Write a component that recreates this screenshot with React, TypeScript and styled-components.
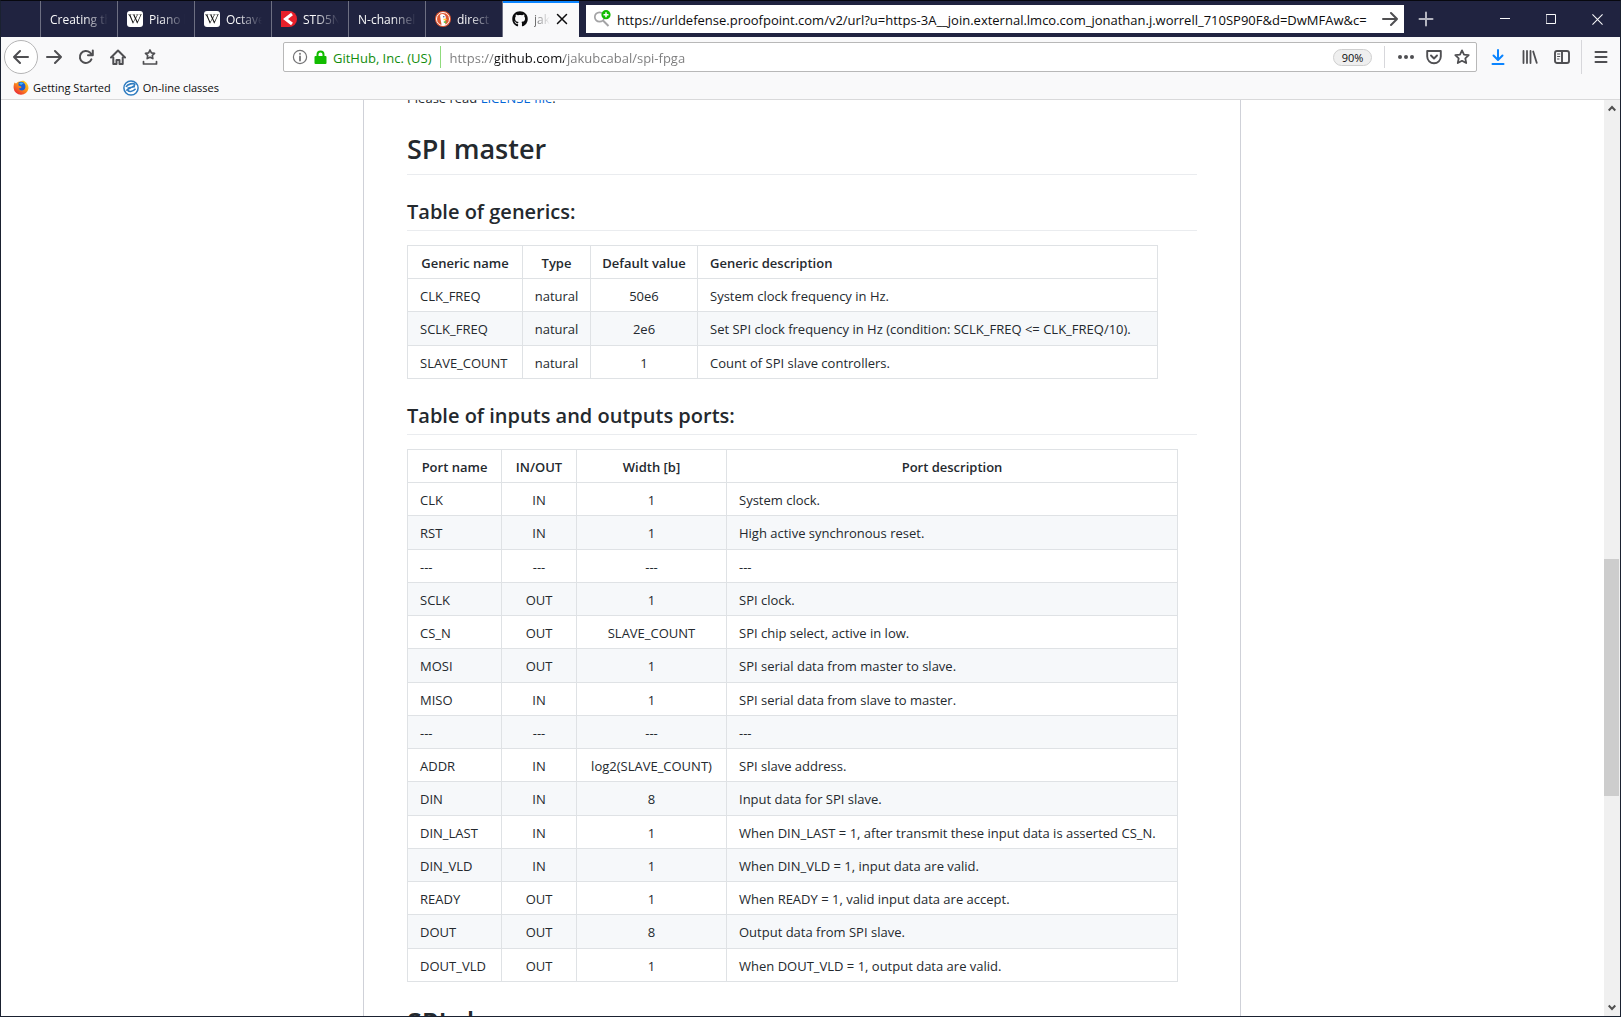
import React from "react";
import styled, { createGlobalStyle, css } from "styled-components";
import { FaGithub, FaWikipediaW } from "react-icons/fa";

const GlobalStyle = createGlobalStyle`
  *, *::before, *::after { box-sizing: border-box; }
  body {
    margin: 0;
    overflow: hidden;
    font-family: "Open Sans", "Noto Sans", sans-serif;
    font-size: 13px;
    color: #24292e;
    background: #fff;
  }
  button, input { font: inherit; margin: 0; }
`;

const Window = styled.div`
  display: flex;
  flex-direction: column;
  height: 100vh;
  border: 1px solid #1a2130;
  border-top-color: #07080f;
`;

/* ---------- tab strip ---------- */

const TabStrip = styled.header`
  display: flex;
  flex: none;
  height: 36px;
  background: #202340;
`;

const TabSpacer = styled.div`
  width: 40px;
  border-right: 1px solid #6d6f82;
`;

const Tab = styled.button<{ $active?: boolean }>`
  display: flex;
  align-items: center;
  gap: 6px;
  flex: none;
  width: 77px;
  height: 36px;
  padding: 0 9px;
  border: 0;
  border-right: 1px solid ${(p) => (p.$active ? "#202340" : "#6d6f82")};
  background: #202340;
  color: #f9f9fa;
  font-size: 12px;
  text-align: left;

  ${(p) =>
    p.$active &&
    css`
      background: #f9f9fa;
      color: #0c0c0d;
      box-shadow: inset 0 2px 0 #0a84ff;
      padding-right: 11px;
    `}
`;

const TabTitle = styled.span`
  flex: 1;
  min-width: 0;
  padding-top: 2px;
  overflow: hidden;
  white-space: nowrap;
  line-height: 18px;
  mask-image: linear-gradient(to left, transparent, #000 24px);
`;

const Favicon = styled.span`
  display: flex;
  align-items: center;
  justify-content: center;
  flex: none;
  width: 16px;
  height: 16px;
`;

const WikiIcon = styled(Favicon)`
  border-radius: 3px;
  background: #fff;
  color: #111;
  font-size: 14px;
`;

const SearchBox = styled.form`
  display: flex;
  align-items: center;
  flex: 1;
  gap: 6px;
  min-width: 0;
  margin: 4px 0 4px 6px;
  padding: 0 6px 0 7px;
  background: #fff;
`;

const SearchInput = styled.input`
  flex: 1;
  min-width: 0;
  padding: 2px 0 0;
  border: 0;
  outline: 0;
  background: transparent;
  color: #0c0c0d;
  font-size: 13px;
  line-height: 20px;
`;

const IconButton = styled.button<{ $width?: number }>`
  display: flex;
  align-items: center;
  justify-content: center;
  flex: none;
  width: ${(p) => p.$width ?? 32}px;
  height: 32px;
  padding: 0;
  border: 0;
  background: none;
  color: #4f4f52;
`;

const NewTab = styled(IconButton)`
  margin: 2px 34px 0 0;
  color: #b4b5c0;
`;

const WindowButton = styled(IconButton)`
  margin-top: 2px;
  color: #f9f9fa;
`;

/* ---------- navigation bar ---------- */

const NavBar = styled.nav`
  display: flex;
  align-items: center;
  flex: none;
  height: 40px;
  padding: 0 1px 0 3px;
  background: #f9f9fa;
`;

const BackButton = styled(IconButton)`
  width: 34px;
  height: 34px;
  border: 1px solid #b5b5b6;
  border-radius: 50%;
  background: #fff;
`;

const DownloadsButton = styled(IconButton)`
  color: #0a84ff;
`;

const AddressBar = styled.div`
  display: flex;
  align-items: center;
  flex: 1;
  min-width: 0;
  height: 30px;
  margin: 0 5px 0 117px;
  padding-left: 8px;
  border: 1px solid #b8b8b8;
  border-radius: 2px;
  background: #fff;
`;

const Identity = styled.button`
  display: flex;
  align-items: center;
  gap: 6px;
  flex: none;
  height: 22px;
  padding: 0 8px 0 0;
  border: 0;
  border-right: 1px solid #8fdb7c;
  background: none;
  color: #737375;
  font-size: 13px;
`;

const Owner = styled.span`
  padding-top: 2px;
  color: #128c0c;
  line-height: 20px;
`;

const AddressInput = styled.input`
  flex: 1;
  min-width: 0;
  padding: 2px 0 0;
  margin-left: 9px;
  border: 0;
  outline: 0;
  color: #7a7a7b;
  font-size: 13px;
  line-height: 20px;
  background: linear-gradient(
    to right,
    #7a7a7b 45px,
    #0c0c0d 45px 114px,
    #7a7a7b 114px
  );
  background-clip: text;
  -webkit-text-fill-color: transparent;
`;

const Zoom = styled.button`
  flex: none;
  width: 39px;
  height: 17px;
  padding: 0;
  margin-right: 12px;
  border: 1px solid #cfcfcf;
  border-radius: 9px;
  background: #efefef;
  color: #0c0c0d;
  font-size: 11px;
  line-height: 15px;
`;

const Divider = styled.span<{ $height: number }>`
  flex: none;
  width: 1px;
  height: ${(p) => p.$height}px;
  background: #d7d7db;
`;

const Tools = styled.div`
  display: flex;
  flex: none;
  padding-right: 3px;
`;

const PageActions = styled.div`
  display: flex;
  align-items: center;
  flex: none;
  padding-left: 7px;
`;

const BookmarksBar = styled.div`
  display: flex;
  align-items: center;
  flex: none;
  gap: 12px;
  height: 23px;
  padding: 0 12px;
  border-bottom: 1px solid #d9d9da;
  background: #f9f9fa;
`;

const Bookmark = styled.a`
  display: flex;
  align-items: center;
  gap: 4px;
  color: #0c0c0d;
  font-size: 11px;
  line-height: 18px;
  text-decoration: none;
`;

/* ---------- page ---------- */

const Viewport = styled.div`
  display: flex;
  flex: 1;
  min-height: 0;
`;

const Page = styled.main`
  flex: 1;
  min-width: 0;
  padding-right: 1px;
  overflow: hidden;
  background: #fff;
`;

const Readme = styled.article`
  width: 100%;
  max-width: 878px;
  margin: -13px auto 0;
  padding: 0 43px;
  border: solid #cfd1d8;
  border-width: 0 1px;
  line-height: 22px;
`;

const Paragraph = styled.p`
  margin: 0;
`;

const TextLink = styled.a`
  color: #0366d6;
  text-decoration: none;
`;

const Heading = styled.h1`
  margin: 22px 0 0;
  padding-bottom: 7px;
  border-bottom: 1px solid #eaecef;
  font-size: 27px;
  font-weight: 600;
  line-height: 36px;
`;

const SubHeading = styled.h2`
  margin: 23px 0 14px;
  padding-bottom: 5px;
  border-bottom: 1px solid #eaecef;
  font-size: 20px;
  font-weight: 600;
  line-height: 27px;
`;

const Table = styled.table<{ $width: number }>`
  width: ${(p) => p.$width}px;
  table-layout: fixed;
  border-collapse: collapse;
`;

const Column = styled.col<{ $width: number }>`
  width: ${(p) => p.$width}px;
`;

const Row = styled.tr`
  tbody &:nth-child(2n) {
    background: #f6f8fa;
  }
  tbody &:nth-child(4n + 2) > td {
    padding-bottom: 5px;
  }
`;

type Align = "left" | "center";

const cell = css<{ $align: Align }>`
  padding: 6px ${(p) => (p.$align === "left" ? 12 : 8)}px 4px;
  border: 1px solid #dfe2e5;
  text-align: ${(p) => p.$align};
  white-space: nowrap;
`;

const HeadCell = styled.th<{ $align: Align }>`
  ${cell}
  font-weight: 600;
`;

const Cell = styled.td<{ $align: Align }>`
  ${cell}
`;

const ScrollBar = styled.div`
  display: grid;
  grid-template-rows: 17px 443fr 237fr 203fr 17px;
  justify-items: center;
  align-items: center;
  flex: none;
  width: 16px;
  background: #f0f0f0;
  color: #505050;
`;

const Thumb = styled.div`
  grid-row: 3;
  justify-self: start;
  width: 15px;
  height: 100%;
  background: #cdcdcd;
`;

const ScrollArrow = styled.svg<{ $row: number }>`
  grid-row: ${(p) => p.$row};
`;

/* ---------- icons ---------- */

function Icon({
  size = 16,
  width = 2,
  children,
}: {
  size?: number;
  width?: number;
  children: React.ReactNode;
}) {
  return (
    <svg
      width={size}
      height={size}
      viewBox="0 0 16 16"
      fill="none"
      stroke="currentColor"
      strokeWidth={width}
      strokeLinecap="round"
      strokeLinejoin="round"
      aria-hidden="true"
    >
      {children}
    </svg>
  );
}

const starPath =
  "M8 1.4l2 4.2 4.7.6-3.4 3.2.9 4.6L8 11.8 3.8 14l.9-4.6L1.3 6.2 6 5.6z";

const RedArrowIcon = () => (
  <svg width="16" height="16" viewBox="0 0 16 16" aria-hidden="true">
    <path d="M0 0h8a8 8 0 0 1 0 16H0z" fill="#e8202a" />
    <path d="M11 3L4.500 8l6.500 5" fill="none" stroke="#fff" strokeWidth="3" />
  </svg>
);

const DuckIcon = () => (
  <svg width="16" height="16" viewBox="0 0 16 16" aria-hidden="true">
    <circle cx="8" cy="8" r="8" fill="#de5833" />
    <circle cx="8" cy="8" r="6.500" fill="none" stroke="#fff" strokeWidth="1" />
    <path d="M5 4c2-2 5.500-.8 5.800 2.200L10.500 9l-.8 1.500 1 3.600c-1.500.5-3 .5-4 .1L5.600 8.500z" fill="#fff" />
    <path d="M8.500 7.500l3.500.4-1 1.300H8.500z" fill="#fc3" />
    <path d="M8.600 10.500l2.600-.6v2.300l-2.400-.5z" fill="#67bd47" />
    <circle cx="8.800" cy="5.700" r="0.700" fill="#2d4f8e" />
  </svg>
);

const SearchAddIcon = () => (
  <svg width="18" height="18" viewBox="0 0 18 18" aria-hidden="true">
    <circle cx="6.500" cy="7" r="4.700" fill="none" stroke="#a3a3a5" strokeWidth="1.700" />
    <path d="M10 10.500l5.500 5.500" stroke="#a3a3a5" strokeWidth="2" />
    <circle cx="13" cy="4.700" r="4.600" fill="#12bc00" />
    <path d="M13 2.200v5M10.500 4.700h5" stroke="#fff" strokeWidth="1.500" />
  </svg>
);

const LockIcon = () => (
  <svg width="13" height="14" viewBox="0 0 13 14" aria-hidden="true">
    <rect x="0.500" y="6" width="12" height="8" rx="1" fill="#12bc00" />
    <path d="M3.500 7V4.500a3 3 0 0 1 6 0V7" fill="none" stroke="#12bc00" strokeWidth="2" />
  </svg>
);

const FirefoxIcon = () => (
  <svg width="16" height="16" viewBox="0 0 16 16" aria-hidden="true">
    <defs>
      <linearGradient id="flame" x1="1" y1="0" x2="0.200" y2="1">
        <stop offset="0" stopColor="#ffe226" />
        <stop offset="0.450" stopColor="#ff9a16" />
        <stop offset="1" stopColor="#e8203a" />
      </linearGradient>
    </defs>
    <path d="M1.500 2.500l1.500 1C4.500 2 6 1.300 8 1.200c1.500-.6 3-.4 3.500 0 2.500 1.300 4 4 4 7.100A7.500 7.500 0 0 1 .6 8C.5 6 .9 4 1.500 2.500z" fill="url(#flame)" />
    <path d="M5.500 2.500c2-1.200 5-.8 6.300 1.500 1.200 2.500.7 5-1 6-2 1-4.300.3-5-1.500l2-.6c.8-.4.8-1 .2-1.400L5.500 5.600z" fill="#1d5fd0" />
    <path d="M6 3.200c1.500-1 3.500-1 4.700 0L8 5z" fill="#3fb7f5" />
  </svg>
);

const ClassesIcon = () => (
  <svg width="16" height="16" viewBox="0 0 16 16" aria-hidden="true">
    <circle cx="8" cy="8" r="7.100" fill="#fff" stroke="#2f7cc0" strokeWidth="1.500" />
    <path d="M3 6.800C5 3.600 10.500 3 11.800 4.300 12.500 6.500 6 8 3.200 10.500M4.600 9.500c.6 3 5 2.500 8-.8M4.500 8.300L12 6.500" fill="none" stroke="#2f7cc0" strokeWidth="1.600" />
  </svg>
);

/* ---------- data ---------- */

interface ColumnSpec {
  title: string;
  width: number;
  align: Align;
  headAlign?: Align;
}

const genericColumns: ColumnSpec[] = [
  { title: "Generic name", width: 115, align: "left", headAlign: "center" },
  { title: "Type", width: 68, align: "center" },
  { title: "Default value", width: 107, align: "center" },
  { title: "Generic description", width: 460, align: "left" },
];

const generics = [
  ["CLK_FREQ", "natural", "50e6", "System clock frequency in Hz."],
  ["SCLK_FREQ", "natural", "2e6", "Set SPI clock frequency in Hz (condition: SCLK_FREQ <= CLK_FREQ/10)."],
  ["SLAVE_COUNT", "natural", "1", "Count of SPI slave controllers."],
];

const portColumns: ColumnSpec[] = [
  { title: "Port name", width: 94, align: "left", headAlign: "center" },
  { title: "IN/OUT", width: 75, align: "center" },
  { title: "Width [b]", width: 150, align: "center" },
  { title: "Port description", width: 451, align: "left", headAlign: "center" },
];

const ports = [
  ["CLK", "IN", "1", "System clock."],
  ["RST", "IN", "1", "High active synchronous reset."],
  ["---", "---", "---", "---"],
  ["SCLK", "OUT", "1", "SPI clock."],
  ["CS_N", "OUT", "SLAVE_COUNT", "SPI chip select, active in low."],
  ["MOSI", "OUT", "1", "SPI serial data from master to slave."],
  ["MISO", "IN", "1", "SPI serial data from slave to master."],
  ["---", "---", "---", "---"],
  ["ADDR", "IN", "log2(SLAVE_COUNT)", "SPI slave address."],
  ["DIN", "IN", "8", "Input data for SPI slave."],
  ["DIN_LAST", "IN", "1", "When DIN_LAST = 1, after transmit these input data is asserted CS_N."],
  ["DIN_VLD", "IN", "1", "When DIN_VLD = 1, input data are valid."],
  ["READY", "OUT", "1", "When READY = 1, valid input data are accept."],
  ["DOUT", "OUT", "8", "Output data from SPI slave."],
  ["DOUT_VLD", "OUT", "1", "When DOUT_VLD = 1, output data are valid."],
];

function DataTable({ columns, rows }: { columns: ColumnSpec[]; rows: string[][] }) {
  const width = columns.reduce((sum, c) => sum + c.width, 1);
  return (
    <Table $width={width}>
      <colgroup>
        {columns.map((c) => (
          <Column key={c.title} $width={c.width} />
        ))}
      </colgroup>
      <thead>
        <Row>
          {columns.map((c) => (
            <HeadCell key={c.title} scope="col" $align={c.headAlign ?? c.align}>
              {c.title}
            </HeadCell>
          ))}
        </Row>
      </thead>
      <tbody>
        {rows.map((row, r) => (
          <Row key={r}>
            {row.map((text, i) => (
              <Cell key={i} $align={columns[i].align}>
                {text}
              </Cell>
            ))}
          </Row>
        ))}
      </tbody>
    </Table>
  );
}

const Wiki = () => (
  <WikiIcon>
    <FaWikipediaW />
  </WikiIcon>
);

const tabs: { title: string; icon?: React.ReactNode }[] = [
  { title: "Creating th" },
  { title: "Piano k", icon: <Wiki /> },
  { title: "Octave", icon: <Wiki /> },
  { title: "STD5N", icon: <Favicon><RedArrowIcon /></Favicon> },
  { title: "N-channel" },
  { title: "direct c", icon: <Favicon><DuckIcon /></Favicon> },
];

export default function App() {
  return (
    <>
      <GlobalStyle />
      <Window>
        <TabStrip>
          <TabSpacer />
          {tabs.map((tab) => (
            <Tab key={tab.title} type="button">
              {tab.icon}
              <TabTitle>{tab.title}</TabTitle>
            </Tab>
          ))}
          <Tab type="button" $active>
            <Favicon><FaGithub size={16} /></Favicon>
            <TabTitle>jak</TabTitle>
            <Icon size={12} width={2}><path d="M2 2l12 12M14 2L2 14" /></Icon>
          </Tab>
          <SearchBox onSubmit={(e) => e.preventDefault()}>
            <SearchAddIcon />
            <SearchInput
              aria-label="Search"
              defaultValue="https://urldefense.proofpoint.com/v2/url?u=https-3A__join.external.lmco.com_jonathan.j.worrell_710SP90F&d=DwMFAw&c="
            />
            <IconButton $width={16} aria-label="Go">
              <Icon><path d="M1 8h14M9 2l6 6-6 6" /></Icon>
            </IconButton>
          </SearchBox>
          <NewTab type="button" $width={44} aria-label="New tab">
            <Icon><path d="M8 1.500v13M1.500 8h13" /></Icon>
          </NewTab>
          <WindowButton type="button" $width={46} aria-label="Minimize">
            <Icon size={10} width={1.6}><path d="M0 7.200h16" /></Icon>
          </WindowButton>
          <WindowButton type="button" $width={46} aria-label="Maximize">
            <Icon size={10} width={1.6}><path d="M0.800 0.800h14.400v14.400H0.800z" /></Icon>
          </WindowButton>
          <WindowButton type="button" $width={46} aria-label="Close">
            <Icon size={11} width={1.5}><path d="M1 1l14 14M15 1L1 15" /></Icon>
          </WindowButton>
        </TabStrip>

        <NavBar>
          <BackButton type="button" aria-label="Back">
            <Icon><path d="M15 8H1M7 2L1 8l6 6" /></Icon>
          </BackButton>
          <IconButton type="button" aria-label="Forward">
            <Icon><path d="M1 8h14M9 2l6 6-6 6" /></Icon>
          </IconButton>
          <IconButton type="button" aria-label="Reload">
            <Icon><path d="M13.400 10.300A6 6 0 1 1 12 3.600l2 2M14.800 1.500v4.700H10" /></Icon>
          </IconButton>
          <IconButton type="button" aria-label="Home">
            <Icon><path d="M1 8.500L8 1.500l7 7M3.300 8.500V15h3.200v-4h3v4h3.200V8.500" /></Icon>
          </IconButton>
          <IconButton type="button" aria-label="Show bookmarks">
            <Icon width={1.7}>
              <path d="M8 1l1.400 2.900 3.100.4-2.200 2.200.5 3.100L8 8.200 5.200 9.600l.5-3.100-2.200-2.200 3.100-.4zM1.500 12.500v2.500h13v-2.500" />
            </Icon>
          </IconButton>

          <AddressBar>
            <Identity type="button">
              <Icon width={1.2}>
                <circle cx="8" cy="8" r="6.600" />
                <path d="M8 7.500v4M8 4.700v.2" strokeWidth="1.800" />
              </Icon>
              <LockIcon />
              <Owner>GitHub, Inc. (US)</Owner>
            </Identity>
            <AddressInput aria-label="Address" defaultValue="https://github.com/jakubcabal/spi-fpga" />
            <Zoom type="button">90%</Zoom>
            <Divider $height={22} />
            <PageActions>
              <IconButton type="button" $width={28} aria-label="Page actions">
                <Icon width={0}>
                  <g fill="currentColor">
                    <circle cx="2" cy="8" r="2" />
                    <circle cx="8" cy="8" r="2" />
                    <circle cx="14" cy="8" r="2" />
                  </g>
                </Icon>
              </IconButton>
              <IconButton type="button" $width={28} aria-label="Save to Pocket">
                <Icon width={1.9}><path d="M1.200 2h13.600v5.500a6.800 6.800 0 0 1-13.600 0zM5 6.500l3 3 3-3" /></Icon>
              </IconButton>
              <IconButton type="button" $width={28} aria-label="Bookmark this page">
                <Icon width={1.8}><path d={starPath} /></Icon>
              </IconButton>
            </PageActions>
          </AddressBar>

          <Tools>
            <DownloadsButton type="button" aria-label="Downloads">
              <Icon><path d="M8 1v9M3.500 6.500L8 11l4.500-4.500M2.500 15h11" /></Icon>
            </DownloadsButton>
            <IconButton type="button" aria-label="Library">
              <Icon width={1.8}><path d="M1.500 2v12M5 2v12M8.500 2v12M11.200 2.500l3.500 11.300" /></Icon>
            </IconButton>
            <IconButton type="button" aria-label="Sidebars">
              <Icon width={1.9}>
                <rect x="1" y="2" width="14" height="12" rx="2" />
                <path d="M8 2v12" />
                <path d="M3.500 5h2.300M3.500 7.500h2.300M3.500 10h1.500" strokeWidth="1" />
              </Icon>
            </IconButton>
          </Tools>
          <Divider $height={34} />
          <IconButton type="button" $width={37} aria-label="Open menu">
            <Icon><path d="M2.500 3h11M2.500 8h11M2.500 13h11" /></Icon>
          </IconButton>
        </NavBar>

        <BookmarksBar>
          <Bookmark href="#getting-started"><FirefoxIcon />Getting Started</Bookmark>
          <Bookmark href="#classes"><ClassesIcon />On-line classes</Bookmark>
        </BookmarksBar>

        <Viewport>
          <Page>
            <Readme>
              <Paragraph>
                Please read <TextLink href="#license">LICENSE file</TextLink>.
              </Paragraph>
              <Heading>SPI master</Heading>
              <SubHeading>Table of generics:</SubHeading>
              <DataTable columns={genericColumns} rows={generics} />
              <SubHeading>Table of inputs and outputs ports:</SubHeading>
              <DataTable columns={portColumns} rows={ports} />
              <Heading>SPI slave</Heading>
            </Readme>
          </Page>
          <ScrollBar>
            <ScrollArrow $row={1} width="8" height="7" viewBox="0 0 8 7" fill="none" stroke="currentColor" strokeWidth="2">
              <path d="M0.700 5.500L4 2l3.300 3.500" />
            </ScrollArrow>
            <Thumb />
            <ScrollArrow $row={5} width="8" height="7" viewBox="0 0 8 7" fill="none" stroke="currentColor" strokeWidth="2">
              <path d="M0.700 1.500L4 5l3.300-3.500" />
            </ScrollArrow>
          </ScrollBar>
        </Viewport>
      </Window>
    </>
  );
}
